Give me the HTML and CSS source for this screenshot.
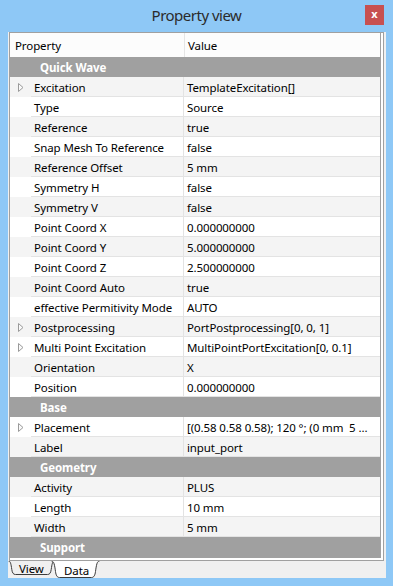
FILE: index.html
```html
<!DOCTYPE html>
<html lang="en">
<head>
    <meta charset="UTF-8">
    <meta name="viewport" content="width=device-width, initial-scale=1.0">
    <title>Property view</title>
    <link rel="stylesheet" href="styles.css">
</head>
<body>
    <div class="window">
        <div class="titlebar">
            <span></span>
            <span class="title">Property view</span>
            <span class="close">x</span>
        </div>
        <div class="panel">
            <div class="frame">
                <div class="grid">
                    <div class="head">
                        <div class="hcell hprop">Property</div>
                        <div class="hcell">Value</div>
                    </div>

                    <div class="section">Quick Wave</div>
                    <div class="row alt">
                        <span class="gutter"><svg class="arrow" width="6" height="9" viewBox="0 0 6 9"><path d="M0.5 0.5 L5 4.5 L0.5 8.5 Z"/></svg></span>
                        <span class="prop">Excitation</span><span class="val">TemplateExcitation[]</span>
                    </div>
                    <div class="row"><span class="gutter"></span><span class="prop">Type</span><span class="val">Source</span></div>
                    <div class="row alt"><span class="gutter"></span><span class="prop">Reference</span><span class="val">true</span></div>
                    <div class="row"><span class="gutter"></span><span class="prop">Snap Mesh To Reference</span><span class="val">false</span></div>
                    <div class="row alt"><span class="gutter"></span><span class="prop">Reference Offset</span><span class="val">5 mm</span></div>
                    <div class="row"><span class="gutter"></span><span class="prop">Symmetry H</span><span class="val">false</span></div>
                    <div class="row alt"><span class="gutter"></span><span class="prop">Symmetry V</span><span class="val">false</span></div>
                    <div class="row"><span class="gutter"></span><span class="prop">Point Coord X</span><span class="val">0.000000000</span></div>
                    <div class="row alt"><span class="gutter"></span><span class="prop">Point Coord Y</span><span class="val">5.000000000</span></div>
                    <div class="row"><span class="gutter"></span><span class="prop">Point Coord Z</span><span class="val">2.500000000</span></div>
                    <div class="row alt"><span class="gutter"></span><span class="prop">Point Coord Auto</span><span class="val">true</span></div>
                    <div class="row"><span class="gutter"></span><span class="prop">effective Permitivity Mode</span><span class="val">AUTO</span></div>
                    <div class="row alt">
                        <span class="gutter"><svg class="arrow" width="6" height="9" viewBox="0 0 6 9"><path d="M0.5 0.5 L5 4.5 L0.5 8.5 Z"/></svg></span>
                        <span class="prop">Postprocessing</span><span class="val">PortPostprocessing[0, 0, 1]</span>
                    </div>
                    <div class="row">
                        <span class="gutter"><svg class="arrow" width="6" height="9" viewBox="0 0 6 9"><path d="M0.5 0.5 L5 4.5 L0.5 8.5 Z"/></svg></span>
                        <span class="prop">Multi Point Excitation</span><span class="val">MultiPointPortExcitation[0, 0.1]</span>
                    </div>
                    <div class="row alt"><span class="gutter"></span><span class="prop">Orientation</span><span class="val">X</span></div>
                    <div class="row"><span class="gutter"></span><span class="prop">Position</span><span class="val">0.000000000</span></div>

                    <div class="section">Base</div>
                    <div class="row">
                        <span class="gutter"><svg class="arrow" width="6" height="9" viewBox="0 0 6 9"><path d="M0.5 0.5 L5 4.5 L0.5 8.5 Z"/></svg></span>
                        <span class="prop">Placement</span><span class="val">[(0.58 0.58 0.58); 120 °; (0 mm  5 ...</span>
                    </div>
                    <div class="row alt"><span class="gutter"></span><span class="prop">Label</span><span class="val">input_port</span></div>

                    <div class="section">Geometry</div>
                    <div class="row alt"><span class="gutter"></span><span class="prop">Activity</span><span class="val">PLUS</span></div>
                    <div class="row"><span class="gutter"></span><span class="prop">Length</span><span class="val">10 mm</span></div>
                    <div class="row alt"><span class="gutter"></span><span class="prop">Width</span><span class="val">5 mm</span></div>

                    <div class="section">Support</div>
                </div>
            </div>
            <div class="tabs">
                <div class="tab">
                    <svg class="tab-shape" width="47" height="14" viewBox="0 0 47 14"><path d="M0.5 0 C2.5 0 3 3 3.8 8.5 C4.3 12 5.3 13.5 7.5 13.5 L39.5 13.5 C41.7 13.5 42.7 12 43.2 8.5 C44 3 44.5 0 46.5 0"/></svg>
                    <span class="tab-label">View</span>
                </div>
                <div class="tab active">
                    <svg class="tab-shape" width="49" height="17" viewBox="0 0 49 17"><path d="M0.5 0 C3 0 3.6 4 4.5 10.5 C5 14.5 6.2 16.5 8.5 16.5 L40.5 16.5 C42.8 16.5 44 14.5 44.5 10.5 C45.4 4 46 0 48.5 0"/></svg>
                    <span class="tab-label">Data</span>
                </div>
            </div>
        </div>
    </div>
</body>
</html>
```

FILE: styles.css
```css
body {
    margin: 0;
    background-color: #8ec8f6;
    font-family: "Noto Sans", sans-serif;
    font-size: 11.5px;
    letter-spacing: -0.1px;
    color: #000;
}
.window {
    width: 393px;
    height: 586px;
    display: flex;
    flex-direction: column;
}
.titlebar {
    height: 32px;
    display: grid;
    grid-template-columns: 1fr auto 1fr;
}
.title {
    font-size: 15px;
    letter-spacing: -0.5px;
    line-height: 30px;
    color: #2b2b2b;
}
.close {
    justify-self: end;
    width: 19px;
    height: 20px;
    margin: 5px 9px 0 0;
    background-color: #c75050;
    color: #fff;
    font-weight: bold;
    font-size: 11px;
    letter-spacing: 0;
    line-height: 18px;
    text-align: center;
}
.panel {
    flex: 1;
    margin: 0 7px 8px 8px;
    padding: 0 2px 0 1px;
    background-color: #f0f0f0;
    display: flex;
    flex-direction: column;
}
.frame {
    border: 1px solid #a0a0a0;
    padding: 0 2px 2px 0;
    background-color: #fff;
}
.grid {
    border-right: 1px solid #a0a0a0;
    border-bottom: 1px solid #a0a0a0;
}
.head {
    display: flex;
    height: 24px;
    line-height: 26px;
    background-color: #fcfcfc;
}
.hprop {
    width: 169px;
    padding-left: 5px;
    border-right: 1px solid #e5e5e5;
}
.hcell + .hcell {
    padding-left: 3px;
}
.section {
    height: 20px;
    line-height: 22px;
    padding-left: 30px;
    background-color: #a0a0a0;
    color: #fff;
    font-weight: bold;
    overflow: hidden;
}
.row {
    display: flex;
    height: 20px;
    background-color: #fff;
}
.row.alt {
    background-color: #f4f4f4;
}
.gutter {
    width: 21px;
    display: flex;
    align-items: center;
    justify-content: center;
}
.arrow path {
    fill: #fafafa;
    stroke: #9a9a9a;
    stroke-width: 1;
}
.prop, .val {
    height: 19px;
    line-height: 21px;
    padding-left: 3px;
    border-bottom: 1px solid #e3e3e3;
    white-space: pre;
    overflow: hidden;
}
.prop {
    width: 149px;
    border-right: 1px solid #e3e3e3;
}
.val {
    flex: 1;
}
.tabs {
    display: flex;
    margin-left: -1px;
}
.tab {
    position: relative;
    width: 47px;
    height: 14px;
}
.tab.active {
    width: 49px;
    height: 17px;
    margin-left: -4px;
}
.tab-shape {
    position: absolute;
    left: 0;
    top: 0;
}
.tab-shape path {
    fill: #f0f0f0;
    stroke: #3c3c3c;
    stroke-width: 1;
}
.active .tab-shape path {
    fill: #fff;
}
.tab-label {
    position: relative;
    display: block;
    padding-left: 11px;
    line-height: 15px;
}
.active .tab-label {
    padding-left: 13px;
    line-height: 20px;
}
```
